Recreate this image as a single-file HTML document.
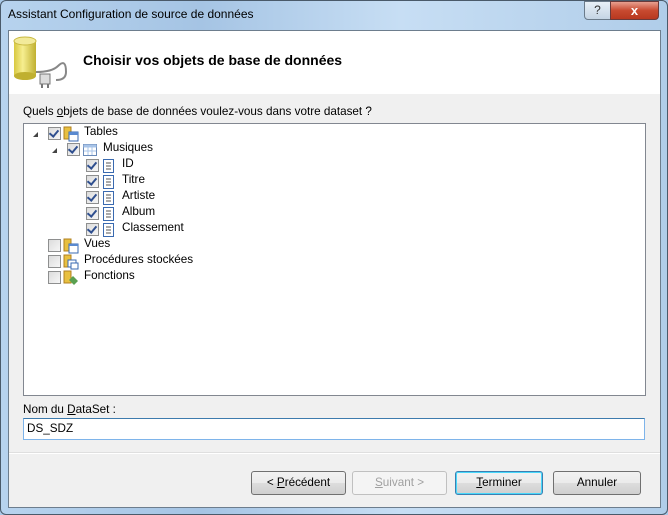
<!DOCTYPE html><html><head><style>
body{margin:0;width:668px;height:515px;overflow:hidden;font-family:"Liberation Sans",sans-serif;font-size:11.7px;background:#a9c9e8;position:relative}
.frame{position:absolute;left:0;top:0;width:666px;height:513px;border:1px solid #4a5a6a;border-radius:6px;background:linear-gradient(90deg,#b7d3ee 0%,#a5c4e4 30%,#c7def4 60%,#b0cde9 100%)}
.abs{position:absolute}
.client{position:absolute;left:8px;top:30px;width:651px;height:476px;background:#f0f0f0;border:1px solid #6d7d8d}
.hdr{position:absolute;left:0;top:0;width:651px;height:63px;background:#fff}
.tree{position:absolute;left:14px;top:92px;width:621px;height:271px;background:#fff;border:1px solid #828790}
.row{position:absolute;height:16px;line-height:16px;font-size:11.7px;color:#000}
.cb{position:absolute;width:11px;height:11px;border:1px solid #8e8f8f;background:linear-gradient(135deg,#dcdcdc,#f6f6f6)}
.cb.c::after{content:"";position:absolute;left:2px;top:0px;width:4px;height:7px;border:solid #2f4f8f;border-width:0 2px 2px 0;transform:rotate(40deg)}
.btn{position:absolute;top:440px;height:22px;line-height:22px;text-align:center;border:1px solid #707070;border-radius:3px;background:linear-gradient(#f2f2f2 0%,#ebebeb 50%,#dddddd 51%,#cfcfcf 100%);font-size:11.7px}
u{text-decoration:underline}
</style></head><body>
<div class="frame"></div>
<div class="abs" style="left:8px;top:7px;font-size:12px;color:#000">Assistant Configuration de source de données</div>
<div class="abs" style="left:584px;top:1px;width:25px;height:17px;border:1px solid #6a7a8a;border-radius:0 0 0 4px;background:linear-gradient(#e8f0f8,#c4d4e4);text-align:center;font-size:12px;line-height:17px;color:#333">?</div>
<div class="abs" style="left:610px;top:1px;width:47px;height:17px;border:1px solid #6a3a3a;border-radius:0 0 4px 0;background:linear-gradient(#e8a090,#c84a30 50%,#b83820);text-align:center;font-size:13px;font-weight:bold;line-height:17px;color:#fff">x</div>
<div class="client">
<div class="hdr">
<svg class="abs" style="left:3px;top:5px" width="60" height="55"><defs><linearGradient id="g" x1="0" x2="1"><stop offset="0" stop-color="#d8c840"/><stop offset=".4" stop-color="#f6ee90"/><stop offset="1" stop-color="#c0b030"/></linearGradient></defs>
<rect x="2" y="5" width="22" height="35" fill="url(#g)"/><ellipse cx="13" cy="5" rx="11" ry="4" fill="#f2ea9a" stroke="#c8b840"/><ellipse cx="13" cy="40" rx="11" ry="4" fill="#c0b030"/>
<path d="M24 36 Q40 36 46 30 Q54 22 54 36 Q54 44 44 44" fill="none" stroke="#888" stroke-width="2"/>
<rect x="28" y="38" width="10" height="10" fill="#ddd" stroke="#777"/><path d="M30 48v4M36 48v4" stroke="#777" stroke-width="2"/></svg>
<div class="abs" style="left:74px;top:21px;font-weight:bold;font-size:14px">Choisir vos objets de base de données</div>
</div>
<div class="abs" style="left:14px;top:74px">Quels <u>o</u>bjets de base de données voulez-vous dans votre dataset ?</div>
<div class="tree">
<div class="abs" style="left:9px;top:8px;width:0;height:0;border-left:5px solid transparent;border-bottom:5px solid #444"></div>
<div class="abs" style="left:28px;top:24px;width:0;height:0;border-left:5px solid transparent;border-bottom:5px solid #444"></div>
<div class="cb c" style="left:24px;top:3px"></div>
<div class="cb c" style="left:43px;top:19px"></div>
<div class="cb c" style="left:62px;top:35px"></div>
<div class="cb c" style="left:62px;top:51px"></div>
<div class="cb c" style="left:62px;top:67px"></div>
<div class="cb c" style="left:62px;top:83px"></div>
<div class="cb c" style="left:62px;top:99px"></div>
<div class="cb" style="left:24px;top:115px"></div>
<div class="cb" style="left:24px;top:131px"></div>
<div class="cb" style="left:24px;top:147px"></div>
<svg class="abs" style="left:39px;top:2px" width="16" height="16"><rect x="1" y="1" width="7" height="12" fill="#e8c040" stroke="#b08020"/><rect x="6" y="6" width="9" height="9" fill="#fff" stroke="#3a6ab0"/><rect x="6" y="6" width="9" height="3" fill="#5a8ad0"/></svg>
<svg class="abs" style="left:58px;top:18px" width="16" height="16"><rect x="1.5" y="2.5" width="13" height="11" fill="#fff" stroke="#6a8ab8"/><rect x="1.5" y="2.5" width="13" height="3" fill="#a8c4e8"/><path d="M6 5v8M10 5v8M2 9h12" stroke="#a8c4e8"/></svg>
<svg class="abs" style="left:77px;top:34px" width="16" height="80"><g id="col"><rect x="2.5" y="1.5" width="10" height="13" fill="#fff" stroke="#3a6ab0"/><path d="M5 5h5M5 8h5M5 11h5" stroke="#555"/></g><use href="#col" y="16"/><use href="#col" y="32"/><use href="#col" y="48"/><use href="#col" y="64"/></svg>
<svg class="abs" style="left:39px;top:114px" width="16" height="48"><rect x="1" y="1" width="7" height="12" fill="#e8c040" stroke="#b08020"/><rect x="6" y="6" width="9" height="9" fill="#fff" stroke="#3a6ab0"/><rect x="6" y="6" width="9" height="2" fill="#5a8ad0"/>
<rect x="1" y="17" width="7" height="12" fill="#e8c040" stroke="#b08020"/><rect x="5" y="22" width="8" height="7" fill="#fff" stroke="#3a6ab0"/><rect x="8" y="25" width="7" height="6" fill="#fff" stroke="#3a6ab0"/>
<rect x="1" y="33" width="7" height="12" fill="#e8c040" stroke="#b08020"/><path d="M10 38l5 5-4 4-5-5z" fill="#5aa050"/></svg>
<div class="row" style="left:60px;top:0px">Tables</div>
<div class="row" style="left:79px;top:16px">Musiques</div>
<div class="row" style="left:98px;top:32px">ID</div>
<div class="row" style="left:98px;top:48px">Titre</div>
<div class="row" style="left:98px;top:64px">Artiste</div>
<div class="row" style="left:98px;top:80px">Album</div>
<div class="row" style="left:98px;top:96px">Classement</div>
<div class="row" style="left:60px;top:112px">Vues</div>
<div class="row" style="left:60px;top:128px">Procédures stockées</div>
<div class="row" style="left:60px;top:144px">Fonctions</div>
</div>
<div class="abs" style="left:14px;top:372px">Nom du <u>D</u>ataSet :</div>
<div class="abs" style="left:14px;top:387px;width:617px;height:20px;background:#fff;border:1px solid #7eb4ea;border-top-color:#3d7bad;line-height:20px;padding-left:3px">DS_SDZ</div>
<div class="abs" style="left:0;top:421px;width:651px;height:1px;background:#dfdfdf"></div>
<div class="abs" style="left:0;top:422px;width:651px;height:1px;background:#fff"></div>
<div class="btn" style="left:242px;width:93px">&lt; <u>P</u>récédent</div>
<div class="btn" style="left:343px;width:93px;border-color:#c0c0c0;background:#f4f4f4;color:#a0a0a0"><u>S</u>uivant &gt;</div>
<div class="btn" style="left:446px;width:86px;border-color:#3c7fb1;box-shadow:inset 0 0 0 1px #48d8fb"><u>T</u>erminer</div>
<div class="btn" style="left:544px;width:86px">Annuler</div>
</div>
</body></html>
